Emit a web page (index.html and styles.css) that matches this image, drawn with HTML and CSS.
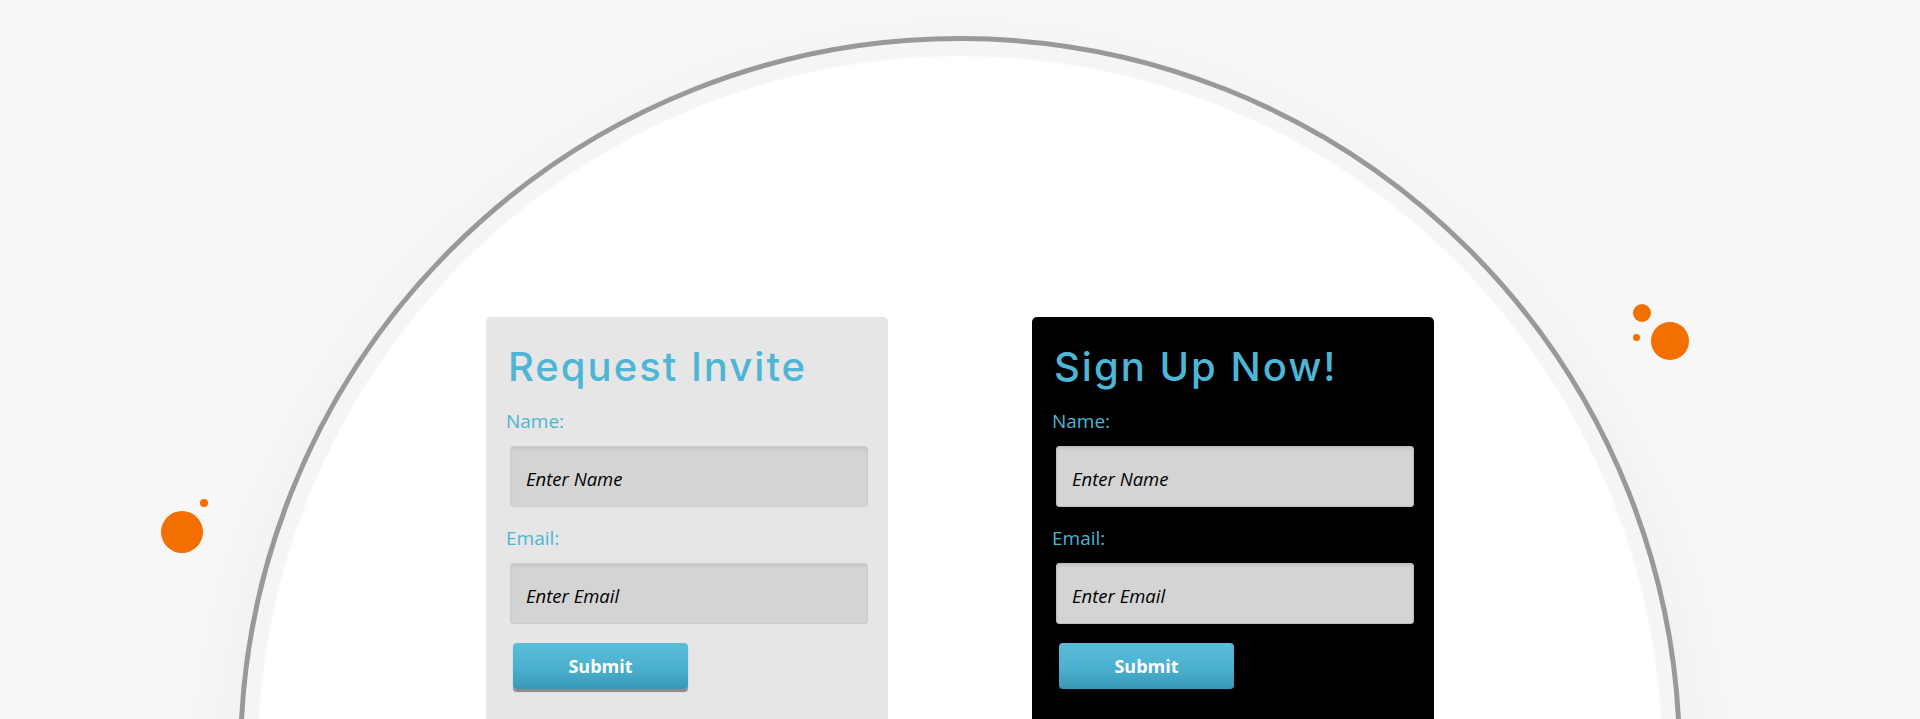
FILE: index.html
```html
<!DOCTYPE html>
<html lang="en">
<head>
<meta charset="UTF-8">
<meta name="viewport" content="width=device-width, initial-scale=1.0">
<title>Invite Forms</title>
<link rel="stylesheet" href="styles.css">
</head>
<body>

<!-- Orange bubbles floating around the page -->
<span class="dot dot-left-big"></span>
<span class="dot dot-left-small"></span>
<span class="dot dot-right-mid"></span>
<span class="dot dot-right-big"></span>
<span class="dot dot-right-small"></span>

<div class="circle">
  <div class="cards">

    <form class="card card-light">
      <h2>Request Invite</h2>
      <label for="inviteName">Name:</label>
      <input type="text" id="inviteName" placeholder="Enter Name">
      <label for="inviteEmail">Email:</label>
      <input type="email" id="inviteEmail" placeholder="Enter Email">
      <button type="submit">Submit</button>
    </form>

    <form class="card card-dark">
      <h2>Sign Up Now!</h2>
      <label for="signupName">Name:</label>
      <input type="text" id="signupName" placeholder="Enter Name">
      <label for="signupEmail">Email:</label>
      <input type="email" id="signupEmail" placeholder="Enter Email">
      <button type="submit">Submit</button>
    </form>

  </div>
</div>

</body>
</html>
```

FILE: styles.css
```css
body {
  font-family: "Open Sans", Arial, sans-serif;
  background-color: #f7f7f7;
  margin: 0;
  padding: 0;
  height: 719px;
  overflow: hidden;
  position: relative;
}

/* big round backdrop */
.circle {
  width: 1434px;
  height: 1434px;
  margin: 36px auto 0;
  border: 5px solid #999;
  border-radius: 50%;
  background-color: #fff;
  box-shadow: inset 0 0 2px 15px #f5f5f5, 0 30px 90px rgba(0,0,0,0.05);
}
.cards {
  display: flex;
  justify-content: center;
  gap: 144px;
  padding-top: 276px;
}

.card {
  width: 362px;
  padding: 26px 20px 40px;
  border-radius: 5px;
  background-color: #e6e6e6;
}
.card-dark {
  background-color: #000;
}
.card h2 {
  font-family: Inter, Lato, sans-serif;
  font-weight: 500;
  font-size: 40px;
  line-height: 48px;
  color: #4db5d5;
  margin: 0 0 17px 2px;
  letter-spacing: 2px;
}
label {
  display: block;
  font-size: 19px;
  line-height: 26px;
  color: #4db5d4;
  margin-bottom: 12px;
}
input {
  display: block;
  box-sizing: border-box;
  width: 358px;
  height: 61px;
  margin: 0 0 18px 4px;
  padding: 3px 15px 0;
  border: 1px solid #cdcdcd;
  border-radius: 3px;
  background-color: #d4d4d4;
  box-shadow: inset 0 2px 3px rgba(0,0,0,0.08);
  font-family: "Open Sans", sans-serif;
  font-size: 18.5px;
}
.card-dark input {
  border-color: #bdbdbd;
}
input::placeholder {
  color: #000;
  font-style: italic;
  opacity: 1;
}
button {
  display: block;
  width: 175px;
  height: 46px;
  margin: 19px 0 0 7px;
  border: none;
  border-radius: 4px;
  background: linear-gradient(#5abdd9, #4bb0cf 55%, #3898b6);
  box-shadow: 0 3px 1px rgba(0,0,0,0.4);
  color: #fff;
  font-family: "Open Sans", sans-serif;
  font-weight: bold;
  font-size: 18px;
  cursor: pointer;
}

.dot {
  position: absolute;
  border-radius: 50%;
  background-color: #f36f00;
}
.dot-left-big { left: 161px; top: 511px; width: 42px; height: 42px; }
.dot-left-small { left: 200px; top: 499px; width: 8px; height: 8px; }
.dot-right-mid { left: 1633px; top: 304px; width: 18px; height: 18px; }
.dot-right-big { left: 1651px; top: 322px; width: 38px; height: 38px; }
.dot-right-small { left: 1633px; top: 334px; width: 7px; height: 7px; }
```
